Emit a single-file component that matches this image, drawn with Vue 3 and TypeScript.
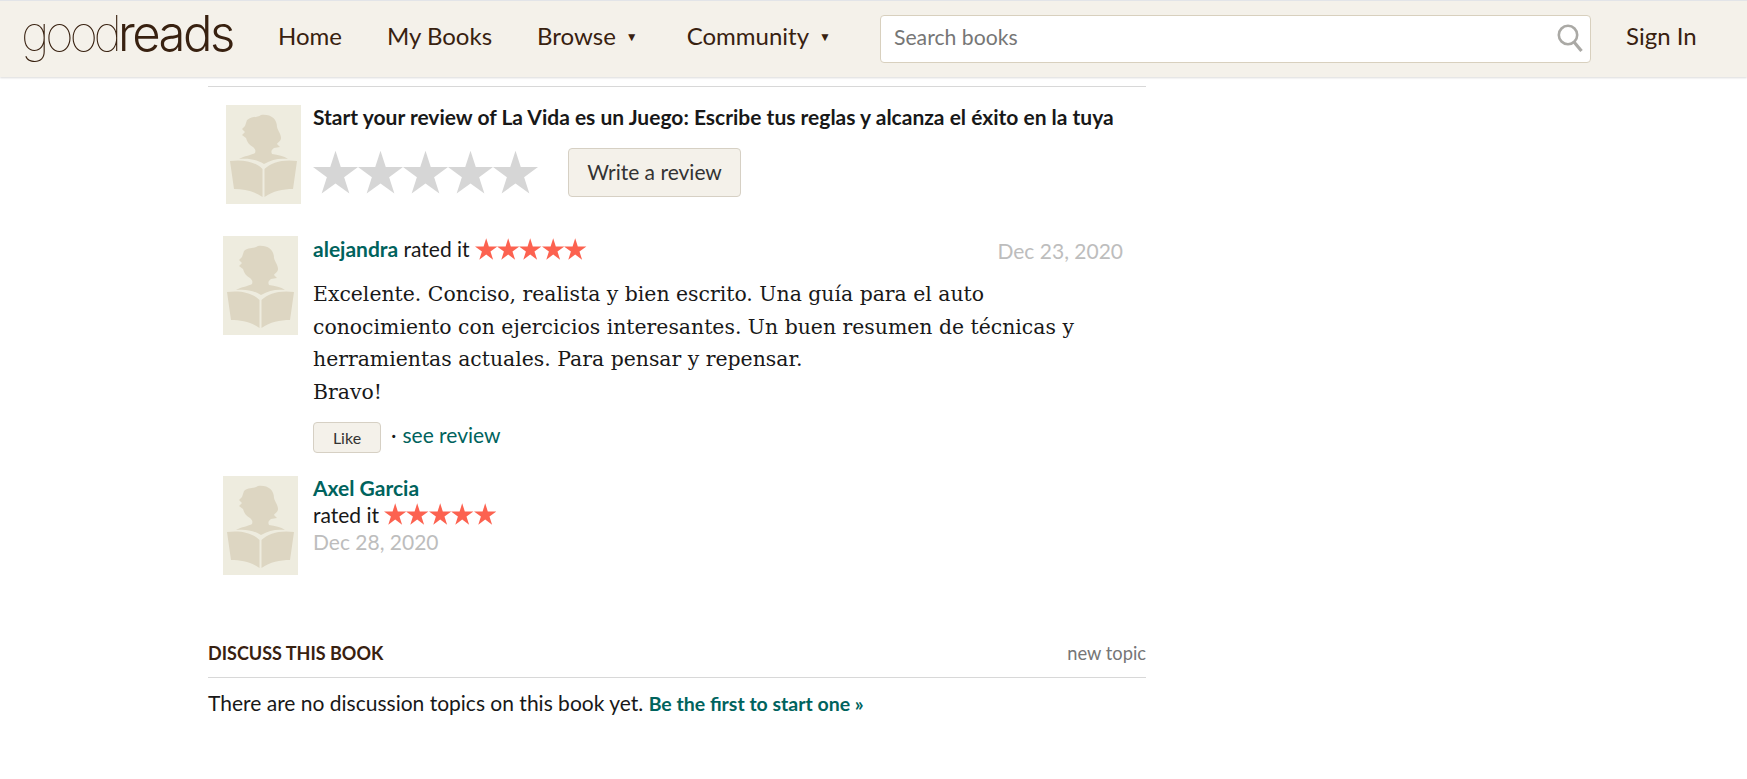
<script setup lang="ts">
const navItems = [
  { label: 'Home', caret: false },
  { label: 'My Books', caret: false },
  { label: 'Browse', caret: true },
  { label: 'Community', caret: true },
]

const fiveStars = [1, 2, 3, 4, 5]
const starPoints = '12,0.4 14.8,9.1 24,9.1 16.6,14.5 19.4,23.2 12,17.8 4.6,23.2 7.4,14.5 0,9.1 9.2,9.1'
</script>

<template>
  <div class="page">
    <svg class="defs" width="0" height="0">
      <symbol id="reader" viewBox="0 0 75 99">
        <rect width="75" height="99" fill="#eeecdf" />
        <path
          fill="#ddd6c2"
          d="M21 15 C26 11 31 13 35 10 C45 9 51 14 51 22 C52 26 55 29 55 33 C55 36 52 37 51 39 L54 42 L48 43 C45 45 45 47 46 49 C52 50 58 51 62 54 C54 53 46 54 38 59 C30 54 22 53 13 54 C18 51 26 50 29 48 C30 45 29 44 27 42 C23 40 21 37 20 33 L16 30 L19 27 L16 24 L19 21 Z"
        />
        <path fill="#ddd6c2" d="M4 56 C17 54 30 57 36.5 64 L36.5 92 C28 86 18 84 8 84 Z" />
        <path fill="#ddd6c2" d="M71 56 C58 54 45 57 38.5 64 L38.5 92 C47 86 57 84 67 84 Z" />
      </symbol>
    </svg>

    <header class="topbar">
      <div class="logo"><span class="logo-thin">good</span><span class="logo-bold">reads</span></div>
      <nav class="nav">
        <a v-for="item in navItems" :key="item.label" class="nav-item">
          {{ item.label }}<span v-if="item.caret" class="caret">▼</span>
        </a>
      </nav>
      <div class="search">
        <span class="search-text">Search books</span>
        <svg class="search-icon" viewBox="0 0 26 28" width="26" height="28">
          <circle cx="11" cy="11" r="9.2" fill="none" stroke="#aaa9a5" stroke-width="2.6" />
          <path d="M17 18 L24.5 27" stroke="#aaa9a5" stroke-width="3.2" fill="none" />
        </svg>
      </div>
      <a class="signin">Sign In</a>
    </header>

    <main class="column">
      <section class="own-review">
        <svg class="avatar"><use href="#reader" /></svg>
        <div class="own-body">
          <div class="own-title">Start your review of La Vida es un Juego: Escribe tus reglas y alcanza el éxito en la tuya</div>
          <div class="own-actions">
            <div class="stars-big">
              <svg v-for="n in fiveStars" :key="n" viewBox="0 0 24 24" width="45" height="45">
                <polygon :points="starPoints" fill="#d6d6d6" />
              </svg>
            </div>
            <button class="write-btn">Write a review</button>
          </div>
        </div>
      </section>

      <section class="review first">
        <svg class="avatar"><use href="#reader" /></svg>
        <div class="review-body">
          <div class="review-head">
            <div class="rating-line">
              <span class="rating-label"><a class="user">alejandra</a> rated it</span>
              <span class="stars-small">
                <svg v-for="n in fiveStars" :key="n" viewBox="0 0 24 24" width="22.4" height="22.4">
                  <polygon :points="starPoints" fill="#fc6250" />
                </svg>
              </span>
            </div>
            <span class="date head-date">Dec 23, 2020</span>
          </div>
          <p class="review-text">
            Excelente. Conciso, realista y bien escrito. Una guía para el auto<br />
            conocimiento con ejercicios interesantes. Un buen resumen de técnicas y<br />
            herramientas actuales. Para pensar y repensar.<br />
            Bravo!
          </p>
          <div class="review-foot">
            <button class="like-btn">Like</button>
            <span class="dot">·</span>
            <a class="see-review">see review</a>
          </div>
        </div>
      </section>

      <section class="review second">
        <svg class="avatar"><use href="#reader" /></svg>
        <div class="stacked">
          <a class="user">Axel Garcia</a>
          <div class="rating-line">
            <span>rated it</span>
            <span class="stars-small">
              <svg v-for="n in fiveStars" :key="n" viewBox="0 0 24 24" width="22.4" height="22.4">
                <polygon :points="starPoints" fill="#fc6250" />
              </svg>
            </span>
          </div>
          <span class="date">Dec 28, 2020</span>
        </div>
      </section>

      <section class="discuss">
        <div class="discuss-head">
          <h2>DISCUSS THIS BOOK</h2>
          <a class="new-topic">new topic</a>
        </div>
        <p class="discuss-text">
          There are no discussion topics on this book yet.
          <a class="first-link">Be the first to start one »</a>
        </p>
      </section>
    </main>
  </div>
</template>

<style>
html,
body {
  margin: 0;
  background: #fff;
}
</style>

<style scoped>
.page {
  font-family: Lato, "Liberation Sans", sans-serif;
  color: #181818;
  height: 779px;
  overflow: hidden;
}

.defs {
  position: absolute;
}

.topbar {
  box-sizing: border-box;
  height: 77px;
  display: flex;
  align-items: center;
  padding: 0 0 0 21px;
  background: #f4f1ea;
  border-top: 1px solid #e2e4e8;
  box-shadow: 0 1px 2px rgba(0, 0, 0, 0.15);
  color: #382110;
}

.logo {
  width: 257px;
  font-family: Inter, "Liberation Sans", sans-serif;
  font-size: 49px;
  line-height: 1;
  margin-top: -11px;
  white-space: nowrap;
}

.logo-thin {
  font-weight: 100;
  letter-spacing: -4.2px;
}

.logo-bold {
  font-weight: 300;
  letter-spacing: -2.5px;
}

.nav {
  display: flex;
  width: 602px;
  margin-top: -8px;
  font-size: 24px;
}

.nav-item {
  margin-right: 45px;
  white-space: nowrap;
}

.nav-item:nth-child(3) {
  margin-right: 49px;
}

.caret {
  font-size: 12px;
  margin-left: 10px;
  vertical-align: 4px;
}

.search {
  box-sizing: border-box;
  width: 711px;
  height: 48px;
  display: flex;
  align-items: center;
  justify-content: space-between;
  padding: 0 7px 0 13px;
  background: #fff;
  border: 1px solid #d8d0be;
  border-radius: 4px;
  font-size: 21.2px;
  color: #767676;
}

.search-text {
  margin-top: -5px;
}

.search-icon {
  margin-top: -2px;
}

.signin {
  margin: -7px 0 0 35px;
  font-size: 24px;
}

.column {
  width: 938px;
  margin-left: 208px;
  padding-top: 9px;
}

.own-review {
  display: flex;
  border-top: 1px solid #d8d8d8;
  padding: 18px 0 0 18px;
}

.avatar {
  width: 75px;
  height: 99px;
  flex: none;
}

.own-body {
  margin-left: 12px;
}

.own-title {
  font-size: 21px;
  font-weight: 700;
  line-height: 26px;
  margin-top: -1px;
}

.own-actions {
  display: flex;
  align-items: center;
  margin-top: 18px;
}

.stars-big {
  display: flex;
}

.stars-big svg {
  display: block;
}

.write-btn {
  box-sizing: border-box;
  width: 173px;
  height: 49px;
  margin-left: 30px;
  padding-bottom: 4px;
  font: 21px Lato, sans-serif;
  color: #333;
  background: #f4f1ea;
  border: 1px solid #d6d0c4;
  border-radius: 4px;
}

.review {
  display: flex;
  padding-left: 15px;
}

.first {
  margin-top: 32px;
}

.second {
  margin-top: 23px;
}

.review-body {
  flex: 1;
  margin-left: 15px;
  padding-right: 23px;
}

.stacked {
  display: flex;
  flex-direction: column;
  margin: -2px 0 0 15px;
  font-size: 21px;
  line-height: 27px;
}

.review-head {
  display: flex;
  justify-content: space-between;
  align-items: center;
  height: 28px;
}

.rating-line {
  display: flex;
  align-items: center;
  gap: 5px;
  font-size: 21px;
}

.rating-label {
  margin-top: -4px;
}

.user {
  font-weight: 700;
  color: #00635d;
}

.stars-small {
  display: flex;
  margin-top: -2px;
}

.stars-small svg {
  display: block;
}

.date {
  font-size: 21px;
  color: #bdbdbd;
}

.head-date {
  margin-top: 0;
}

.review-text {
  margin: 14px 0 0;
  font-family: "DejaVu Serif", "Liberation Serif", serif;
  font-size: 20.4px;
  line-height: 32.6px;
  color: #181818;
}

.review-foot {
  display: flex;
  align-items: center;
  margin-top: 14px;
  font-size: 21px;
}

.like-btn {
  box-sizing: border-box;
  width: 68px;
  height: 31px;
  font: 16px Lato, sans-serif;
  color: #333;
  background: #f4f1ea;
  border: 1px solid #d6d0c4;
  border-radius: 4px;
}

.dot {
  margin: -6px 6px 0 10px;
}

.see-review {
  margin-top: -7px;
  color: #00635d;
}

.discuss {
  margin-top: 67px;
}

.discuss-head {
  display: flex;
  justify-content: space-between;
  align-items: baseline;
  padding-bottom: 13px;
  border-bottom: 1px solid #d8d8d8;
}

.discuss-head h2 {
  margin: 0;
  font-size: 18px;
  font-weight: 700;
  color: #382110;
}

.new-topic {
  font-size: 18.3px;
  color: #767676;
}

.discuss-text {
  margin: 12px 0 0;
  font-size: 21px;
  line-height: 26px;
}

.first-link {
  font-size: 19.5px;
  font-weight: 700;
  color: #00635d;
}
</style>
